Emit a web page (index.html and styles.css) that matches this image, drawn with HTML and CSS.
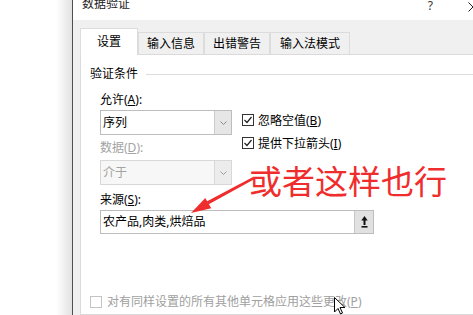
FILE: index.html
```html
<!DOCTYPE html>
<html lang="zh-CN">
<head>
<meta charset="utf-8">
<title>数据验证</title>
<link rel="stylesheet" href="styles.css">
</head>
<body>
<div class="screen">
  <div class="desk"></div>
  <div class="dialog">
    <div class="titlebar">
      <span class="title">数据验证</span>
      <span class="help">?</span>
      <svg class="close" width="10" height="10" viewBox="0 0 10 10"><path d="M0.5 0.5 L9.5 9.5 M9.5 0.5 L0.5 9.5" stroke="#222" stroke-width="1" fill="none"/></svg>
    </div>
    <div class="dialog-body">
      <div class="tabs">
        <div class="tab tab-active">设置</div>
        <div class="tab">输入信息</div>
        <div class="tab">出错警告</div>
        <div class="tab tab-wide">输入法模式</div>
      </div>
      <div class="panel">
        <div class="group-head"><span>验证条件</span><span class="rule"></span></div>
        <div class="group-body">
          <div class="cols">
            <div class="col-left">
              <div class="lbl">允许(<u>A</u>):</div>
              <div class="select">
                <span class="select-val">序列</span>
                <span class="select-btn"><svg width="7" height="4" viewBox="0 0 7 4"><polyline points="0.5,0.5 3.5,3.5 6.5,0.5" fill="none" stroke="#8a8a8a" stroke-width="1"/></svg></span>
              </div>
              <div class="lbl lbl-gap lbl-disabled">数据(<u>D</u>):</div>
              <div class="select select-disabled select-gap">
                <span class="select-val">介于</span>
                <span class="select-btn"><svg width="7" height="4" viewBox="0 0 7 4"><polyline points="0.5,0.5 3.5,3.5 6.5,0.5" fill="none" stroke="#9a9a9a" stroke-width="1"/></svg></span>
              </div>
            </div>
            <div class="col-right">
              <div class="check-row">
                <span class="cb"><svg width="10" height="10" viewBox="0 0 10 10"><polyline points="1.5,5 4,7.5 8.5,2" fill="none" stroke="#222" stroke-width="1.2"/></svg></span>
                <span>忽略空值(<u>B</u>)</span>
              </div>
              <div class="check-row check-row2">
                <span class="cb"><svg width="10" height="10" viewBox="0 0 10 10"><polyline points="1.5,5 4,7.5 8.5,2" fill="none" stroke="#222" stroke-width="1.2"/></svg></span>
                <span>提供下拉箭头(<u>I</u>)</span>
              </div>
            </div>
          </div>
          <div class="lbl src-lbl">来源(<u>S</u>):</div>
          <div class="src">
            <span class="src-val">农产品,肉类,烘焙品</span>
            <span class="src-btn"><svg width="7" height="12" viewBox="0 0 7 12"><polygon points="3.5,0 0.3,4.5 6.7,4.5" fill="#111"/><rect x="2.5" y="4" width="2" height="5" fill="#111"/><rect x="0.5" y="10" width="6" height="1.6" fill="#111"/></svg></span>
          </div>
        </div>
        <div class="apply-row">
          <span class="cb cb-disabled"></span>
          <span>对有同样设置的所有其他单元格应用这些更改(<u>P</u>)</span>
        </div>
      </div>
    </div>
  </div>
  <div class="note">或者这样也行</div>
  <svg class="note-arrow" width="473" height="315" viewBox="0 0 473 315">
    <polygon points="253,177 254.2,179.2 208.3,204.6 206.7,201.6" fill="#f02d2d"/>
    <polygon points="191,213 205.3,197.9 211.3,208.3" fill="#f02d2d"/>
  </svg>
  <svg class="cursor" width="12" height="18" viewBox="0 0 12 18">
    <polygon points="0.5,0.5 0.5,15 4,11.5 6.5,17 8.5,16 6,10.5 11,10.5" fill="#fff" stroke="#000" stroke-width="1"/>
  </svg>
</div>
</body>
</html>
```
FILE: styles.css
```css
html, body {
  margin: 0;
  padding: 0;
}
body {
  width: 473px;
  height: 315px;
  overflow: hidden;
  background: #fff;
  font-family: "Noto Sans", "Noto Sans CJK SC", sans-serif;
  font-size: 12px;
  color: #000;
}
u {
  text-decoration: underline;
  text-underline-offset: 1px;
}
.screen {
  position: relative;
  display: flex;
  width: 473px;
  height: 315px;
  overflow: hidden;
}
.desk {
  width: 72px;
  flex: none;
  background: linear-gradient(to right, #fff 56px, #e2e2e2 72px);
}
.dialog {
  flex: 1;
  min-width: 0;
  border-left: 1px solid #4f4f4f;
  display: flex;
  flex-direction: column;
}
.titlebar {
  height: 20px;
  flex: none;
  background: #fff;
  display: flex;
  align-items: flex-start;
  padding-left: 9px;
}
.title {
  line-height: 12px;
  margin-top: -2px;
  color: #1a1a1a;
}
.help {
  margin-left: auto;
  line-height: 12px;
  margin-top: 0;
  color: #333;
}
.close {
  margin-left: 35px;
  margin-right: -5px;
  margin-top: 2px;
  flex: none;
}
.dialog-body {
  flex: 1;
  background: #f0f0f0;
  padding: 8px 0 0 7px;
  display: flex;
  flex-direction: column;
}
.tabs {
  display: flex;
  align-items: flex-end;
  height: 26px;
  flex: none;
}
.tab {
  height: 21px;
  line-height: 21px;
  padding: 0 8px;
  border: 1px solid #dcdcdc;
  border-bottom: none;
  background: #f0f0f0;
}
.tab-wide {
  padding: 0 9px;
}
.tab-active {
  position: relative;
  z-index: 1;
  height: 26px;
  line-height: 25px;
  padding: 0 16px;
  background: #fff;
  margin-bottom: -1px;
}
.panel {
  flex: 1;
  background: #fff;
  border: 1px solid #dadada;
  border-right: none;
  padding: 11px 0 0 9px;
}
.group-head {
  display: flex;
  align-items: center;
  gap: 8px;
  line-height: 16px;
}
.rule {
  flex: 1;
  height: 1px;
  background: #dcdcdc;
}
.group-body {
  margin: 10px 0 0 10px;
}
.cols {
  display: grid;
  grid-template-columns: 132px auto;
  column-gap: 10px;
}
.lbl {
  line-height: 16px;
}
.lbl-gap {
  margin-top: 5px;
}
.lbl-disabled {
  color: #a3a3a3;
}
.select {
  margin-top: 2px;
  height: 25px;
  box-sizing: border-box;
  border: 1px solid #bdbdbd;
  background: #fff;
  display: flex;
}
.select-gap {
  margin-top: 4px;
}
.select-val {
  flex: 1;
  padding-left: 2px;
  line-height: 23px;
}
.select-btn {
  width: 16px;
  background: #e6e6e6;
  border-left: 1px solid #cccccc;
  display: flex;
  align-items: center;
  justify-content: center;
}
.select-disabled {
  border-color: #d8d8d8;
  background: #f7f7f7;
  color: #a3a3a3;
}
.select-disabled .select-btn {
  background: #ececec;
  border-left-color: #d8d8d8;
}
.col-right {
  padding-top: 18px;
}
.check-row {
  height: 20px;
  display: flex;
  align-items: center;
  gap: 4px;
}
.check-row2 {
  margin-top: 3px;
}
.cb {
  width: 12px;
  height: 12px;
  box-sizing: border-box;
  border: 1px solid #333;
  background: #fff;
  display: flex;
  align-items: center;
  justify-content: center;
  flex: none;
}
.cb-disabled {
  border-color: #c4c4c4;
}
.src-lbl {
  margin-top: 7px;
}
.src {
  margin-top: 2px;
  width: 274px;
  height: 24px;
  box-sizing: border-box;
  border: 1px solid #bdbdbd;
  display: flex;
}
.src-val {
  flex: 1;
  padding-left: 2px;
  line-height: 22px;
}
.src-btn {
  width: 18px;
  background: #e1e1e1;
  border-left: 1px solid #c6c6c6;
  display: flex;
  align-items: center;
  justify-content: center;
}
.apply-row {
  margin-top: 60px;
  display: flex;
  align-items: center;
  gap: 5px;
  line-height: 16px;
  color: #a0a0a0;
}
.note {
  position: absolute;
  left: 249px;
  top: 165px;
  font-size: 33px;
  line-height: 33px;
  color: #f02d2d;
  white-space: nowrap;
}
.note-arrow {
  position: absolute;
  left: 0;
  top: 0;
  pointer-events: none;
}
.cursor {
  position: absolute;
  left: 334px;
  top: 297px;
}
```
